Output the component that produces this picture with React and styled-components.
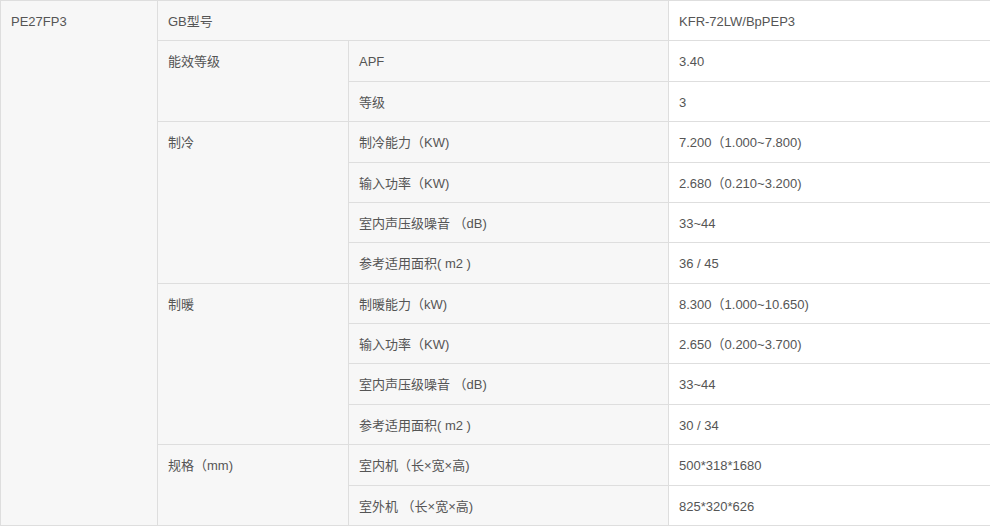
import styled, { createGlobalStyle } from 'styled-components';

const GlobalStyle = createGlobalStyle`
  html, body {
    margin: 0;
    padding: 0;
    background: #fff;
    overflow: hidden;
  }
  body {
    font-family: "Liberation Sans", Arial, "Noto Sans CJK SC", sans-serif;
    font-size: 13px;
    color: #555;
  }
`;

const columns = [157, 191, 320, 324];

const rows = [
  { group: 'GB型号', span: 1, full: true, value: 'KFR-72LW/BpPEP3' },
  { group: '能效等级', span: 2, label: 'APF', value: '3.40' },
  { label: '等级', value: '3' },
  { group: '制冷', span: 4, label: '制冷能力（KW)', value: '7.200（1.000~7.800)' },
  { label: '输入功率（KW)', value: '2.680（0.210~3.200)' },
  { label: '室内声压级噪音 （dB)', value: '33~44' },
  { label: '参考适用面积( m2 )', value: '36 / 45' },
  { group: '制暖', span: 4, label: '制暖能力（kW)', value: '8.300（1.000~10.650)' },
  { label: '输入功率（KW)', value: '2.650（0.200~3.700)' },
  { label: '室内声压级噪音 （dB)', value: '33~44' },
  { label: '参考适用面积( m2 )', value: '30 / 34' },
  { group: '规格（mm)', span: 2, label: '室内机（长×宽×高)', value: '500*318*1680' },
  { label: '室外机 （长×宽×高)', value: '825*320*626' },
];

export default function App() {
  return (
    <>
      <GlobalStyle />
      <SpecTable>
        <colgroup>
          {columns.map((w, i) => (
            <Column key={i} $width={w} />
          ))}
        </colgroup>
        <tbody>
          {rows.map((row, i) => (
            <Row key={i}>
              {i === 0 && (
                <Cell $shade rowSpan={rows.length}>
                  PE27FP3
                </Cell>
              )}
              {row.group && (
                <Cell $shade rowSpan={row.span} colSpan={row.full ? 2 : 1}>
                  {row.group}
                </Cell>
              )}
              {!row.full && <Cell $shade>{row.label}</Cell>}
              <Cell>{row.value}</Cell>
            </Row>
          ))}
        </tbody>
      </SpecTable>
    </>
  );
}

const SpecTable = styled.table`
  width: 992px;
  table-layout: fixed;
  border-collapse: collapse;
  border-spacing: 0;
`;

const Column = styled.col`
  width: ${(p) => p.$width}px;
`;

const Row = styled.tr`
  height: 40.38px;
`;

const Cell = styled.td`
  box-sizing: border-box;
  padding: 13px 10px 0;
  line-height: 16px;
  vertical-align: top;
  text-align: left;
  white-space: nowrap;
  border: 1px solid #dedede;
  background: ${(p) => (p.$shade ? '#f7f7f7' : '#fff')};
`;
